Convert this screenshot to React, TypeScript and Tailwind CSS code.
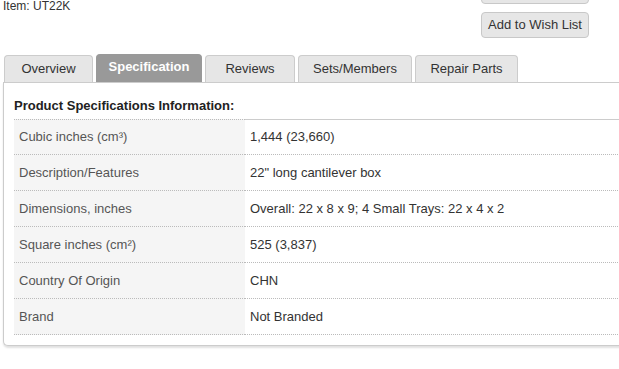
import React from 'react'

const tabs = [
  { label: 'Overview', width: 'w-[89px]' },
  { label: 'Specification', width: 'w-[106px]', active: true },
  { label: 'Reviews', width: 'w-[90px]' },
  { label: 'Sets/Members', width: 'w-[114px]' },
  { label: 'Repair Parts', width: 'w-[103px]' }
]

const specs = [
  { name: 'Cubic inches (cm³)', value: '1,444 (23,660)' },
  { name: 'Description/Features', value: '22" long cantilever box' },
  { name: 'Dimensions, inches', value: 'Overall: 22 x 8 x 9; 4 Small Trays: 22 x 4 x 2' },
  { name: 'Square inches (cm²)', value: '525 (3,837)' },
  { name: 'Country Of Origin', value: 'CHN' },
  { name: 'Brand', value: 'Not Branded' }
]

export default function App() {
  return (
    <div className="h-[369px] w-[619px] overflow-hidden bg-white font-['Liberation_Sans',Arial,sans-serif] text-[#333]">
      <div className="-mt-[22px] w-[660px]">
        {/* item + buttons */}
        <div className="flex justify-between w-[619px] pr-[30px]">
          <div className="pl-[3px] pt-[20px] text-[12px] leading-[16px]">Item: UT22K</div>
          <div className="flex flex-col gap-[8px]">
            <button
              aria-label="Add to Cart"
              className="h-[26px] w-[108px] rounded-[4px] border border-[#c8c8c8] bg-[#e6e6e6]"
            />
            <button className="h-[26px] w-[108px] rounded-[4px] border border-[#c8c8c8] bg-[#e6e6e6] text-[13px]">
              Add to Wish List
            </button>
          </div>
        </div>

        {/* tabs */}
        <div className="mt-[16px] ml-[4px] flex items-end gap-[3px] h-[28px]">
          {tabs.map((t) =>
            t.active ? (
              <div
                key={t.label}
                className={`${t.width} h-[28px] pb-[3px] flex items-center justify-center rounded-t-[4px] border border-b-0 border-[#999] bg-[#999] text-[13px] font-bold text-white`}
              >
                {t.label}
              </div>
            ) : (
              <div
                key={t.label}
                className={`${t.width} h-[27px] flex items-center justify-center rounded-t-[4px] border border-b-0 border-[#ccc] bg-[#e6e6e6] text-[13px] text-[#333]`}
              >
                {t.label}
              </div>
            )
          )}
        </div>

        {/* panel */}
        <div className="ml-[3px] rounded-bl-[5px] border border-r-0 border-[#ccc] bg-white pl-[10px] pt-[15px] pb-[10px] shadow-[0_2px_2px_rgba(0,0,0,0.12)]">
          <h2 className="text-[13px] font-bold leading-[15px] text-[#222]">
            Product Specifications Information:
          </h2>
          <div className="mt-[6px] text-[13px]">
            {specs.map((s, i) => (
              <div key={s.name} className="grid grid-cols-[231px_1fr] h-[36px]">
                <div
                  className={`flex items-center bg-[#f5f5f5] pl-[5px] text-[#555] border-b border-dotted border-[#bbb] ${
                    i === 0 ? 'border-t' : ''
                  }`}
                >
                  {s.name}
                </div>
                <div
                  className={`flex items-center pl-[5px] text-[#333] border-b border-dotted border-b-[#bbb] ${
                    i === 0 ? 'border-t border-t-[#ccc] [border-top-style:solid]' : ''
                  }`}
                >
                  {s.value}
                </div>
              </div>
            ))}
          </div>
        </div>
      </div>
    </div>
  )
}
